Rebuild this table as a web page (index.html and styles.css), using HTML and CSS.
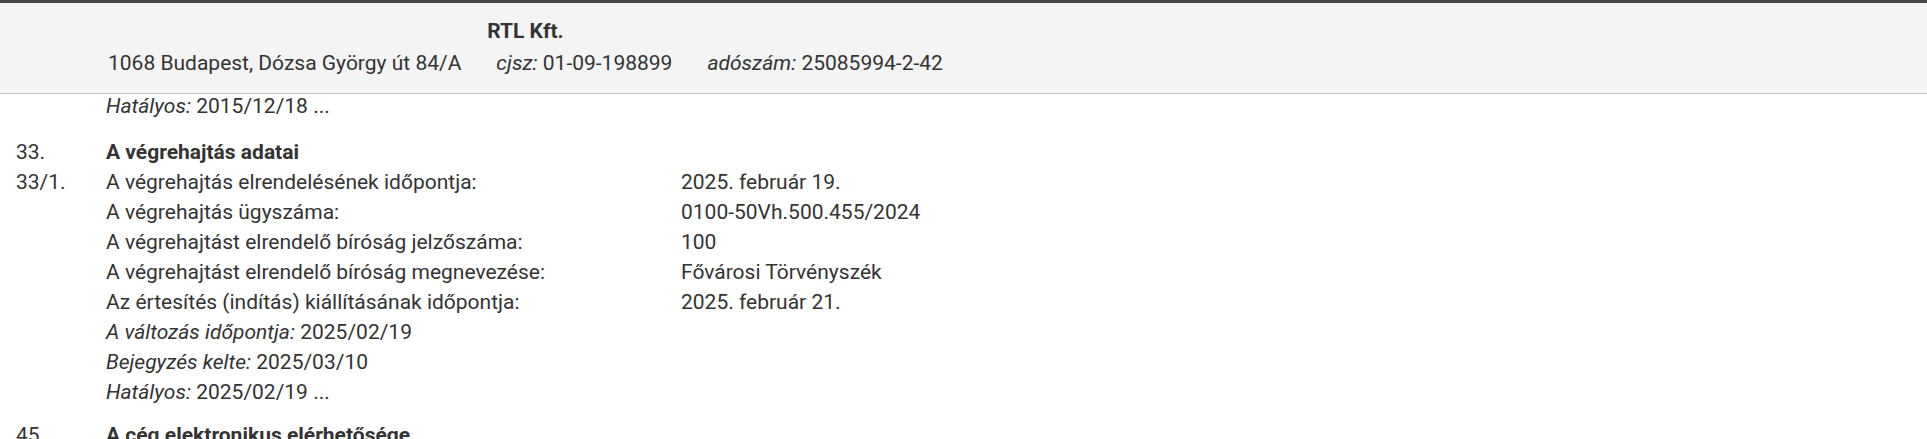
FILE: index.html
```html
<!DOCTYPE html>
<html lang="hu">

<head>
    <meta charset="UTF-8">
    <meta name="viewport" content="width=device-width, initial-scale=1.0">
    <title>Cégkivonat - RTL Kft.</title>
    <link rel="stylesheet" href="styles.css">
</head>

<body>
    <header class="firmHeader">
        <div class="firmBox">
            <div class="firmName">RTL Kft.</div>
            <div class="firmAddress">
                <span>1068 Budapest, Dózsa György út 84/A</span>
                <span><i>cjsz:</i> 01-09-198899</span>
                <span><i>adószám:</i> 25085994-2-42</span>
            </div>
        </div>
    </header>

    <main class="extract">
        <div class="rubric">
            <div class="meta"><i>Hatályos:</i> 2015/12/18 ...</div>
        </div>

        <section class="rubric newSection">
            <div class="num">33.</div>
            <div class="title">A végrehajtás adatai</div>

            <div class="num">33/1.</div>
            <div class="label">A végrehajtás elrendelésének időpontja:</div>
            <div class="value">2025. február 19.</div>

            <div class="label">A végrehajtás ügyszáma:</div>
            <div class="value">0100-50Vh.500.455/2024</div>

            <div class="label">A végrehajtást elrendelő bíróság jelzőszáma:</div>
            <div class="value">100</div>

            <div class="label">A végrehajtást elrendelő bíróság megnevezése:</div>
            <div class="value">Fővárosi Törvényszék</div>

            <div class="label">Az értesítés (indítás) kiállításának időpontja:</div>
            <div class="value">2025. február 21.</div>

            <div class="meta"><i>A változás időpontja:</i> 2025/02/19</div>
            <div class="meta"><i>Bejegyzés kelte:</i> 2025/03/10</div>
            <div class="meta"><i>Hatályos:</i> 2025/02/19 ...</div>
        </section>

        <section class="rubric newSection last">
            <div class="num">45.</div>
            <div class="title">A cég elektronikus elérhetősége</div>
        </section>
    </main>
</body>

</html>
```

FILE: styles.css
```css
body {
    margin: 0;
    font-family: Roboto, "Liberation Sans", sans-serif;
    font-size: 21px;
    line-height: 30px;
    color: #333;
    background-color: #fff;
}

/* sticky firm header */

.firmHeader {
    background-color: #f4f4f4;
    border-top: 3px solid #444;
    border-bottom: 1px solid #c2c2c2;
    padding: 13px 0 15px 108px;
}

.firmBox {
    display: inline-block;
    text-align: center;
}

.firmName {
    font-weight: bold;
    margin-bottom: 2px;
}

.firmAddress {
    display: flex;
    gap: 35px;
}

/* extract rows */

.extract {
    margin-top: -3px;
    padding-left: 16px;
}

.rubric {
    display: grid;
    grid-template-columns: 90px 575px 1fr;
}

.newSection {
    margin-top: 16px;
}

.newSection.last {
    margin-top: 13px;
}

.num {
    grid-column: 1;
}

.title {
    grid-column: 2 / -1;
    font-weight: bold;
}

.label {
    grid-column: 2;
}

.value {
    grid-column: 3;
}

.meta {
    grid-column: 2 / -1;
}
```
